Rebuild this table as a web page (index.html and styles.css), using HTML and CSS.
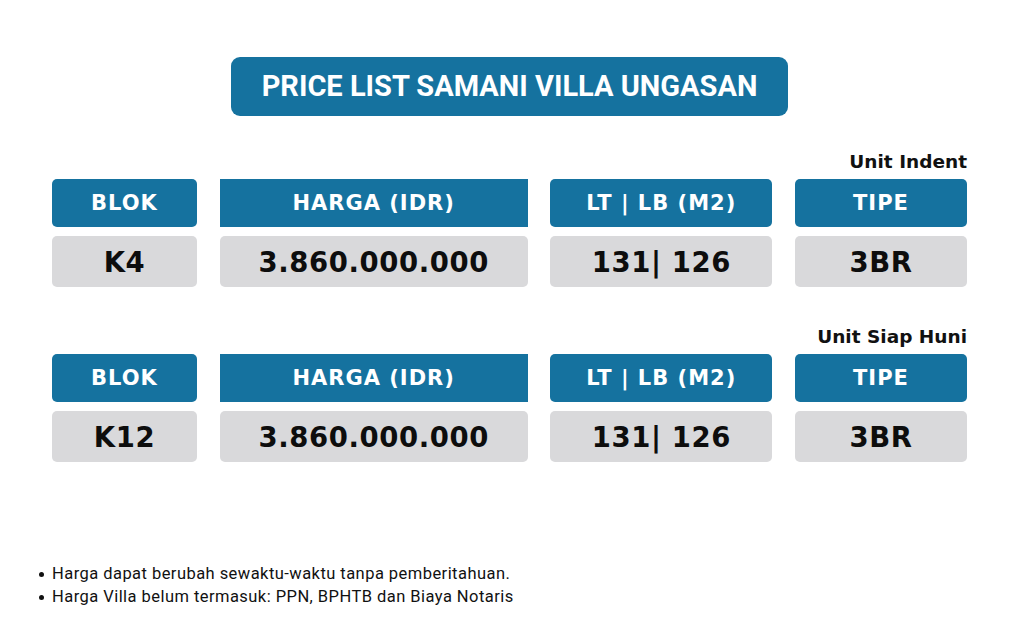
FILE: index.html
```html
<!DOCTYPE html>
<html lang="id">
<head>
<meta charset="utf-8">
<title>Price List Samani Villa Ungasan</title>
<link rel="stylesheet" href="styles.css">
</head>
<body>
<main class="page">
  <header class="title-wrap">
    <h1 class="title">PRICE LIST SAMANI VILLA UNGASAN</h1>
  </header>

  <section class="group">
    <div class="label">Unit Indent</div>
    <div class="grid">
      <div class="cell head">BLOK</div>
      <div class="cell head square">HARGA (IDR)</div>
      <div class="cell head">LT | LB (M2)</div>
      <div class="cell head">TIPE</div>
      <div class="cell val">K4</div>
      <div class="cell val">3.860.000.000</div>
      <div class="cell val">131| 126</div>
      <div class="cell val">3BR</div>
    </div>
  </section>

  <section class="group second">
    <div class="label">Unit Siap Huni</div>
    <div class="grid">
      <div class="cell head">BLOK</div>
      <div class="cell head square">HARGA (IDR)</div>
      <div class="cell head">LT | LB (M2)</div>
      <div class="cell head">TIPE</div>
      <div class="cell val">K12</div>
      <div class="cell val">3.860.000.000</div>
      <div class="cell val">131| 126</div>
      <div class="cell val">3BR</div>
    </div>
  </section>

  <ul class="notes">
    <li>Harga dapat berubah sewaktu-waktu tanpa pemberitahuan.</li>
    <li>Harga Villa belum termasuk: PPN, BPHTB dan Biaya Notaris</li>
  </ul>
</main>
</body>
</html>
```

FILE: styles.css
```css
* { box-sizing: border-box; }
html, body { margin: 0; padding: 0; background: #ffffff; }
body { width: 1024px; height: 627px; overflow: hidden; }

.page {
  padding: 57px 57px 0 52px;
  display: flex;
  flex-direction: column;
}

.title-wrap {
  display: flex;
  justify-content: center;
}

.title {
  margin: 0;
  width: 557px;
  height: 59px;
  background: #15729f;
  border-radius: 9px;
  color: #ffffff;
  font-family: Roboto, "Liberation Sans", sans-serif;
  font-weight: 700;
  font-size: 29px;
  line-height: 59px;
  text-align: center;
}

.group {
  margin-top: 35px;
  display: flex;
  flex-direction: column;
}

.group.second { margin-top: 39px; }

.label {
  align-self: flex-end;
  font-family: "DejaVu Sans", sans-serif;
  font-weight: 700;
  font-size: 18.5px;
  line-height: 22px;
  color: #111111;
  margin-bottom: 6px;
}

.grid {
  display: grid;
  grid-template-columns: 145px 308px 222px 172px;
  grid-template-rows: 48px 51px;
  justify-content: space-between;
  row-gap: 9px;
}

.cell {
  display: flex;
  align-items: center;
  justify-content: center;
  font-family: "DejaVu Sans", sans-serif;
  font-weight: 700;
  border-radius: 5px;
}

.head {
  background: #15729f;
  color: #ffffff;
  font-size: 21px;
  letter-spacing: 1px;
}

.head.square { border-radius: 0; }

.val {
  background: #d9d9db;
  color: #0d0d0d;
  font-size: 27.5px;
  letter-spacing: 0.6px;
}

.notes {
  list-style: none;
  margin: 100px 0 0 -13px;
  padding: 0;
  font-family: Roboto, "Liberation Sans", sans-serif;
  font-size: 16.5px;
  line-height: 23px;
  letter-spacing: 0.45px;
  color: #111111;
}

.notes li {
  display: flex;
  align-items: center;
}

.notes li::before {
  content: "";
  width: 5px;
  height: 5px;
  margin: 2px 8px 0 0;
  border-radius: 50%;
  background: #111111;
  flex: none;
}
```
